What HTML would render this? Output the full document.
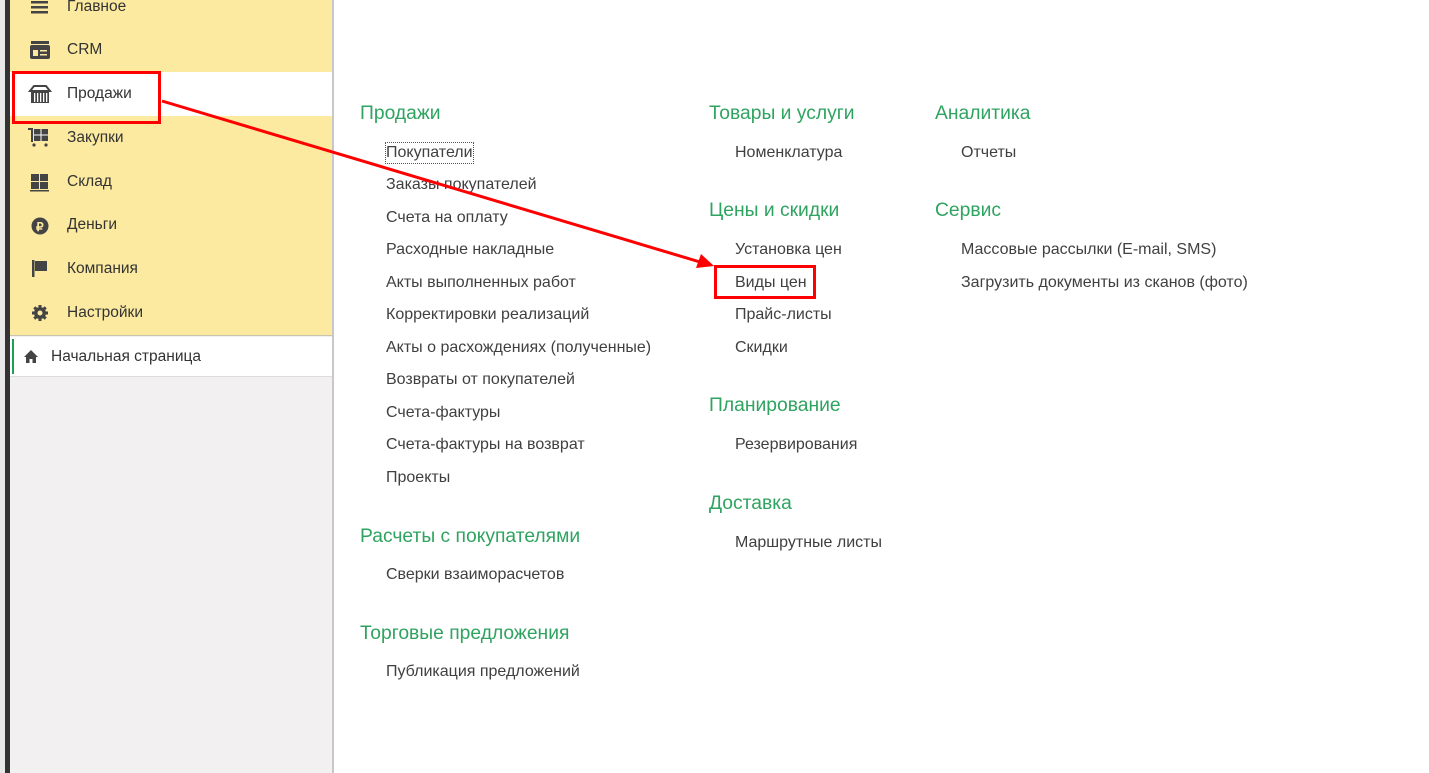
<!DOCTYPE html>
<html><head><meta charset="utf-8"><style>
body{margin:0;width:1429px;height:773px;position:relative;overflow:hidden;background:#fff;font-family:"Liberation Sans",Arial,sans-serif;}
.a{position:absolute;white-space:nowrap;line-height:20px;}
.s{font-size:15.5px;color:#333;top:2px}
.h{font-size:19.3px;color:#2fa360;}
.i{font-size:16px;color:#404040;}
</style></head><body>
<div style="position:absolute;left:0;top:0;width:5px;height:773px;background:#e8e8e8"></div>
<div style="position:absolute;left:5px;top:0;width:5px;height:773px;background:#333"></div>
<div style="position:absolute;left:10px;top:0;width:322px;height:773px;background:#f2f0f0"></div>
<div style="position:absolute;left:10px;top:0;width:322px;height:335px;background:#fbeaa0"></div>
<div style="position:absolute;left:10px;top:72px;width:322px;height:44px;background:#fff"></div>
<div style="position:absolute;left:10px;top:335px;width:322px;height:1px;background:#c8c4b0"></div>
<div style="position:absolute;left:10px;top:337px;width:322px;height:39px;background:#fff;border-bottom:1px solid #ddd"></div>
<div style="position:absolute;left:12px;top:339px;width:2px;height:35px;background:#1fa050"></div>
<div style="position:absolute;left:332px;top:0;width:2px;height:773px;background:#c8c8c8"></div>

<svg style="position:absolute;left:0;top:0" width="334" height="380">
<g fill="#444">
<rect x="31" y="1" width="17" height="2.5"/><rect x="31" y="6" width="17" height="2.5"/><rect x="31" y="11" width="17" height="2.5"/>
<rect x="31" y="41" width="18" height="3"/><rect x="30" y="45" width="20" height="14" rx="2"/>
<rect x="31" y="91" width="18" height="12"/><path d="M30 91h20l-4-5h-12z" fill="none" stroke="#444" stroke-width="2"/>
<rect x="34" y="129" width="14" height="12"/><rect x="28" y="128" width="4" height="2"/><rect x="31" y="128" width="2" height="14"/><circle cx="34" cy="145" r="1.6"/><circle cx="46" cy="145" r="1.6"/>
<rect x="31" y="174" width="8" height="7"/><rect x="40" y="174" width="8" height="7"/><rect x="31" y="182" width="8" height="7"/><rect x="40" y="182" width="8" height="7"/><rect x="30" y="190" width="19" height="1.5"/>
<circle cx="40" cy="226" r="8.5"/>
<rect x="32" y="260" width="2.5" height="17"/><path d="M35 261h12v10h-12z"/>
<circle cx="40" cy="313" r="6"/>
<g stroke="#444" stroke-width="3"><line x1="40" y1="305" x2="40" y2="321"/><line x1="32" y1="313" x2="48" y2="313"/><line x1="34.3" y1="307.3" x2="45.7" y2="318.7"/><line x1="45.7" y1="307.3" x2="34.3" y2="318.7"/></g>
<path d="M24 357l7-7 7 7h-2v6h-3.5v-4h-3v4h-3.5v-6z"/>
</g>
<circle cx="40" cy="313" r="2.5" fill="#fbeaa0"/>
<text x="36" y="231" font-size="12" font-weight="bold" fill="#fbeaa0" font-family="Liberation Sans">₽</text>
<rect x="33" y="50" width="5" height="6" fill="#fbeaa0"/><rect x="40" y="50" width="7" height="1.5" fill="#fbeaa0"/><rect x="40" y="54" width="7" height="1.5" fill="#fbeaa0"/>
<g fill="#fff"><rect x="34" y="93" width="1.3" height="9"/><rect x="37" y="93" width="1.3" height="9"/><rect x="40" y="93" width="1.3" height="9"/><rect x="43" y="93" width="1.3" height="9"/><rect x="46" y="93" width="1.3" height="9"/>
<rect x="40.5" y="129" width="1" height="12"/><rect x="34" y="134.5" width="14" height="1"/></g>
</svg>

<div class="a s" style="left:67px;top:-3px">Главное</div>
<div class="a s" style="left:67px;top:40px">CRM</div>
<div class="a s" style="left:67px;top:84px">Продажи</div>
<div class="a s" style="left:67px;top:128px">Закупки</div>
<div class="a s" style="left:67px;top:172px">Склад</div>
<div class="a s" style="left:67px;top:215px">Деньги</div>
<div class="a s" style="left:67px;top:259px">Компания</div>
<div class="a s" style="left:67px;top:303px">Настройки</div>
<div class="a s" style="left:51px;top:347px">Начальная страница</div>

<div class="a h" style="left:360px;top:104px">Продажи</div>
<div class="a i" style="left:386px;top:143px;outline:1px dotted #555;outline-offset:0">Покупатели</div>
<div class="a i" style="left:386px;top:175px">Заказы покупателей</div>
<div class="a i" style="left:386px;top:208px">Счета на оплату</div>
<div class="a i" style="left:386px;top:240px">Расходные накладные</div>
<div class="a i" style="left:386px;top:273px">Акты выполненных работ</div>
<div class="a i" style="left:386px;top:305px">Корректировки реализаций</div>
<div class="a i" style="left:386px;top:338px">Акты о расхождениях (полученные)</div>
<div class="a i" style="left:386px;top:370px">Возвраты от покупателей</div>
<div class="a i" style="left:386px;top:403px">Счета-фактуры</div>
<div class="a i" style="left:386px;top:435px">Счета-фактуры на возврат</div>
<div class="a i" style="left:386px;top:468px">Проекты</div>
<div class="a h" style="left:360px;top:527px">Расчеты с покупателями</div>
<div class="a i" style="left:386px;top:565px">Сверки взаиморасчетов</div>
<div class="a h" style="left:360px;top:624px">Торговые предложения</div>
<div class="a i" style="left:386px;top:662px">Публикация предложений</div>

<div class="a h" style="left:709px;top:104px">Товары и услуги</div>
<div class="a i" style="left:735px;top:143px">Номенклатура</div>
<div class="a h" style="left:709px;top:201px">Цены и скидки</div>
<div class="a i" style="left:735px;top:240px">Установка цен</div>
<div class="a i" style="left:735px;top:273px">Виды цен</div>
<div class="a i" style="left:735px;top:305px">Прайс-листы</div>
<div class="a i" style="left:735px;top:338px">Скидки</div>
<div class="a h" style="left:709px;top:396px">Планирование</div>
<div class="a i" style="left:735px;top:435px">Резервирования</div>
<div class="a h" style="left:709px;top:494px">Доставка</div>
<div class="a i" style="left:735px;top:533px">Маршрутные листы</div>

<div class="a h" style="left:935px;top:104px">Аналитика</div>
<div class="a i" style="left:961px;top:143px">Отчеты</div>
<div class="a h" style="left:935px;top:201px">Сервис</div>
<div class="a i" style="left:961px;top:240px">Массовые рассылки (E-mail, SMS)</div>
<div class="a i" style="left:961px;top:273px">Загрузить документы из сканов (фото)</div>

<svg style="position:absolute;left:0;top:0" width="1429" height="773">
<rect x="13.5" y="72.5" width="146" height="50" fill="none" stroke="#f00" stroke-width="3"/>
<rect x="715.5" y="266.5" width="99" height="31" fill="none" stroke="#f00" stroke-width="3"/>
<line x1="162" y1="101" x2="700" y2="262" stroke="#f00" stroke-width="3"/>
<path d="M714 266L696 268L701 254Z" fill="#f00"/>
</svg>
</body></html>
